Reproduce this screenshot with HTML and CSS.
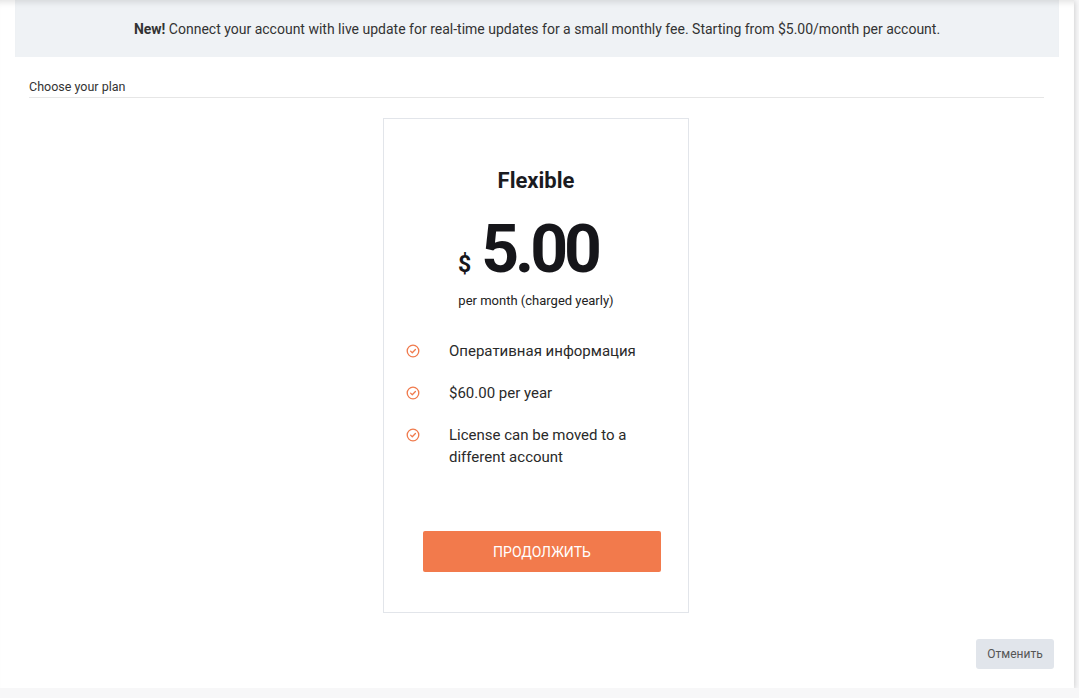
FILE: index.html
```html
<!DOCTYPE html>
<html lang="en">
<head>
    <meta charset="UTF-8">
    <meta name="viewport" content="width=device-width, initial-scale=1.0">
    <title>Choose your plan</title>
    <link rel="stylesheet" href="styles.css">
</head>
<body>
    <div class="modal">
        <div class="banner">
            <p><strong>New!</strong> Connect your account with live update for real-time updates for a small monthly fee. Starting from $5.00/month per account.</p>
        </div>

        <div class="section-title">Choose your plan</div>

        <div class="plans">
            <div class="plan">
                <h2>Flexible</h2>
                <div class="price">
                    <span class="currency">$</span>
                    <span class="amount">5.00</span>
                </div>
                <p class="period">per month (charged yearly)</p>

                <ul class="features">
                    <li>
                        <svg class="check" viewBox="0 0 14 14" width="14" height="14">
                            <circle cx="7" cy="7" r="5.8" fill="none" stroke="#f07a4c" stroke-width="1.3"/>
                            <path d="M4.6 7.1 L6.3 8.7 L9.4 5.5" fill="none" stroke="#f07a4c" stroke-width="1.3" stroke-linecap="round" stroke-linejoin="round"/>
                        </svg>
                        <span>Оперативная информация</span>
                    </li>
                    <li>
                        <svg class="check" viewBox="0 0 14 14" width="14" height="14">
                            <circle cx="7" cy="7" r="5.8" fill="none" stroke="#f07a4c" stroke-width="1.3"/>
                            <path d="M4.6 7.1 L6.3 8.7 L9.4 5.5" fill="none" stroke="#f07a4c" stroke-width="1.3" stroke-linecap="round" stroke-linejoin="round"/>
                        </svg>
                        <span>$60.00 per year</span>
                    </li>
                    <li>
                        <svg class="check" viewBox="0 0 14 14" width="14" height="14">
                            <circle cx="7" cy="7" r="5.8" fill="none" stroke="#f07a4c" stroke-width="1.3"/>
                            <path d="M4.6 7.1 L6.3 8.7 L9.4 5.5" fill="none" stroke="#f07a4c" stroke-width="1.3" stroke-linecap="round" stroke-linejoin="round"/>
                        </svg>
                        <span>License can be moved to a different account</span>
                    </li>
                </ul>

                <button class="btn-continue" type="button">Продолжить</button>
            </div>
        </div>

        <div class="footer">
            <button class="btn-cancel" type="button">Отменить</button>
        </div>
    </div>
</body>
</html>
```

FILE: styles.css
```css
body {
    margin: 0;
    padding: 0;
    font-family: Roboto, "Liberation Sans", sans-serif;
    background-color: #f7f7f8;
    color: #333;
}
.modal {
    width: 1074px;
    height: 688px;
    background: #fff;
    box-shadow: 0 1px 6px rgba(0, 0, 0, 0.2), inset 0 7px 6px -5px rgba(0, 0, 0, 0.12);
    display: flex;
    flex-direction: column;
}
.banner {
    margin: 0 15px;
    height: 57px;
    background: #eff2f5;
    display: flex;
    align-items: center;
    justify-content: center;
    box-shadow: inset 0 7px 6px -5px rgba(0, 0, 0, 0.12);
}
.banner p {
    margin: 0;
    font-size: 14px;
    color: #333;
}
.section-title {
    margin: 22px 30px 0 29px;
    padding-bottom: 2px;
    font-size: 12.5px;
    line-height: 16px;
    color: #333;
    border-bottom: 1px solid #e6e6e6;
}
.plans {
    display: flex;
    justify-content: center;
    margin-top: 20px;
}
.plan {
    width: 304px;
    height: 493px;
    border: 1px solid #e2e5ea;
    display: flex;
    flex-direction: column;
    align-items: center;
    margin-left: -2px;
}
.plan h2 {
    margin: 49px 0 0;
    font-size: 22px;
    line-height: 26px;
    font-weight: 700;
    color: #1b1b1f;
}
.price {
    display: flex;
    align-items: baseline;
    margin-top: 25px;
    color: #16161a;
    height: 62px;
}
.currency {
    font-size: 23px;
    font-weight: 700;
    margin-right: 10px;
}
.amount {
    font-size: 66px;
    line-height: 62px;
    font-weight: 700;
    letter-spacing: -4px;
    margin-right: 16px;
}
.period {
    margin: 11px 0 0;
    font-size: 13px;
    line-height: 18px;
    color: #222;
}
.features {
    list-style: none;
    margin: 30px 0 0;
    padding: 0 20px 0 22px;
    align-self: stretch;
}
.features li {
    display: flex;
    align-items: flex-start;
    font-size: 15px;
    line-height: 22px;
    color: #2a2a2a;
    margin-bottom: 20px;
}
.features li:last-child {
    margin-bottom: 0;
}
.check {
    flex: none;
    margin: 4px 29px 0 0;
}
.features span {
    width: 200px;
}
.btn-continue {
    margin-top: 63px;
    margin-left: 12px;
    width: 238px;
    height: 41px;
    background-color: #f27a4c;
    color: #fff;
    border: none;
    border-radius: 2px;
    font-family: inherit;
    font-size: 14px;
    text-transform: uppercase;
    cursor: pointer;
}
.footer {
    display: flex;
    justify-content: flex-end;
    margin-top: 26px;
    padding-right: 20px;
}
.btn-cancel {
    width: 78px;
    height: 30px;
    background: #e1e5eb;
    color: #555;
    border: none;
    border-radius: 3px;
    font-family: inherit;
    font-size: 12px;
    cursor: pointer;
}
```
